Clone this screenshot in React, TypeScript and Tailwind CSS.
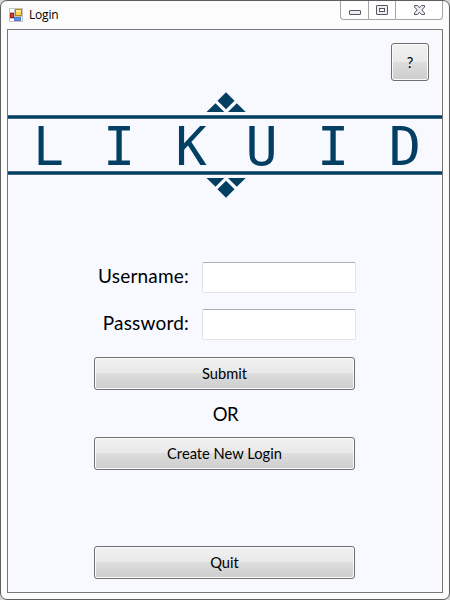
import type { ReactNode } from "react";

const NAVY = "#033f63";

const LETTERS: { ch: string; x: number; w: number }[] = [
  { ch: "L", x: 48.5, w: 0.95 },
  { ch: "I", x: 119, w: 1 },
  { ch: "K", x: 191, w: 0.97 },
  { ch: "U", x: 261.6, w: 1 },
  { ch: "I", x: 333, w: 1 },
  { ch: "D", x: 404.8, w: 1 },
];

function Ornament() {
  return (
    <g fill={NAVY}>
      <path d="M217.500 100.700 226 92.300 234.500 100.700 226 109.200Z" />
      <path d="M206.500 112 215.500 103.300 224.300 112Z" />
      <path d="M228 112 236.800 103.300 245.700 112Z" />
    </g>
  );
}

function Logo() {
  return (
    <svg className="block h-[116px] w-[434px] shrink-0" viewBox="8 87 434 116">
      <Ornament />
      <g transform="matrix(1 0 0 -1 0 290)">
        <Ornament />
      </g>
      <rect x="8" y="115" width="434" height="4" fill="#3f6c88" />
      <rect x="8" y="116" width="434" height="2" fill={NAVY} />
      <rect x="8" y="171" width="434" height="4" fill="#3f6c88" />
      <rect x="8" y="172" width="434" height="2" fill={NAVY} />
      {LETTERS.map(({ ch, x, w }, i) => (
        <text
          key={i}
          transform={`translate(${x} 165) scale(${w} 1)`}
          textAnchor="middle"
          fontFamily="'DejaVu Sans Mono', monospace"
          fontSize="53.5"
          fill={NAVY}
        >
          {ch}
        </text>
      ))}
    </svg>
  );
}

function Button({ children, className }: { children: ReactNode; className: string }) {
  return (
    <button
      className={`flex shrink-0 items-center justify-center rounded-[3px] border border-[#707070] bg-[linear-gradient(#f2f2f2,#e8e8e8_49%,#dddddd_50%,#cdcdcd)] text-[14.7px] text-black shadow-[inset_0_0_0_1px_#fafafa] ${className}`}
    >
      {children}
    </button>
  );
}

function Field({ label, type }: { label: string; type: string }) {
  return (
    <label className="flex h-[31px] items-start justify-end pr-[86px]">
      <span className="mr-[13px] text-[19px] leading-[28px] tracking-[0.2px]">{label}</span>
      <input
        type={type}
        className="h-[31px] w-[154px] rounded-[2px] border border-[#e2e3ea] border-t-[#abadb3] bg-white outline-none"
      />
    </label>
  );
}

function AppIcon() {
  return (
    <svg className="h-[14px] w-[14px]" viewBox="0 0 14 14">
      <rect width="14" height="14" fill="#c4c4c4" />
      <path d="M1 1h4v3H1zM1 11h4v2H1zM12 9h1v4h-1z" fill="#fff" />
      <rect x="6.500" y="1.500" width="6" height="6" fill="#ffd24d" stroke="#b58510" />
      <path d="M7 2h5v2H7z" fill="#ffeb9a" />
      <rect x="1.500" y="5.500" width="3" height="4" fill="#d44432" stroke="#a01a12" />
      <rect x="5.500" y="9.500" width="6" height="3" fill="#5b93e6" stroke="#4a7bcf" />
    </svg>
  );
}

function Controls() {
  return (
    <div className="mr-[6px] flex h-[19px] w-[103px] rounded-b-[4px] border border-t-0 border-[#a5a5a5] bg-white">
      <svg className="h-[18px] w-[101px]" viewBox="341 1 101 18" fill="none">
        <path d="M368.500 1v18M395.500 1v18" stroke="#a5a5a5" />
        <rect x="349.500" y="10.500" width="11" height="4" rx=".5" fill="#eee" stroke="#535666" />
        <rect x="376.500" y="5.500" width="11" height="9" rx=".5" fill="#eee" stroke="#535666" />
        <rect x="379.500" y="8.500" width="5" height="3" fill="#fff" stroke="#535666" />
        <path d="M414.500 5.500h3l2 2.300 2-2.300h3v1.500l-2.700 3 2.700 3v1.500h-3l-2-2.300-2 2.300h-3V13l2.700-3-2.700-3z" fill="#eee" stroke="#535666" />
      </svg>
    </div>
  );
}

export default function App() {
  return (
    <div className="h-[600px] w-[450px] bg-[#d4d4d4] font-[Lato,sans-serif] text-black">
      <div className="flex h-[600px] w-[450px] flex-col overflow-hidden rounded-[7px] border border-[#5e5e5e] bg-[#fcfcfc]">
        <header className="flex h-7 shrink-0 items-start">
          <div className="flex flex-1 items-center pt-[7px] pl-2">
            <AppIcon />
            <span className="ml-[6px] font-['Open_Sans',sans-serif] text-[12px] leading-[14px] tracking-[-0.2px]">Login</span>
          </div>
          <Controls />
        </header>
        <main className="mx-[6px] flex h-[564px] w-[436px] flex-col border border-[#777] bg-[#f8f9ff]">
          <div className="flex h-[57px] shrink-0 items-start justify-end pt-[13px] pr-[13px]">
            <Button className="h-[38px] w-[38px]">?</Button>
          </div>
          <Logo />
          <div className="mt-[59px] flex flex-col gap-4">
            <Field label="Username:" type="text" />
            <Field label="Password:" type="password" />
          </div>
          <div className="mt-[17px] flex flex-col items-center pr-[1px]">
            <Button className="h-[33px] w-[261px]">Submit</Button>
            <div className="flex h-[47px] items-center pt-[3px] pl-[2px] text-[18.5px] tracking-[-0.5px]">OR</div>
            <Button className="h-[33px] w-[261px]">Create New Login</Button>
            <Button className="mt-[76px] h-[33px] w-[261px]">Quit</Button>
          </div>
        </main>
      </div>
    </div>
  );
}
